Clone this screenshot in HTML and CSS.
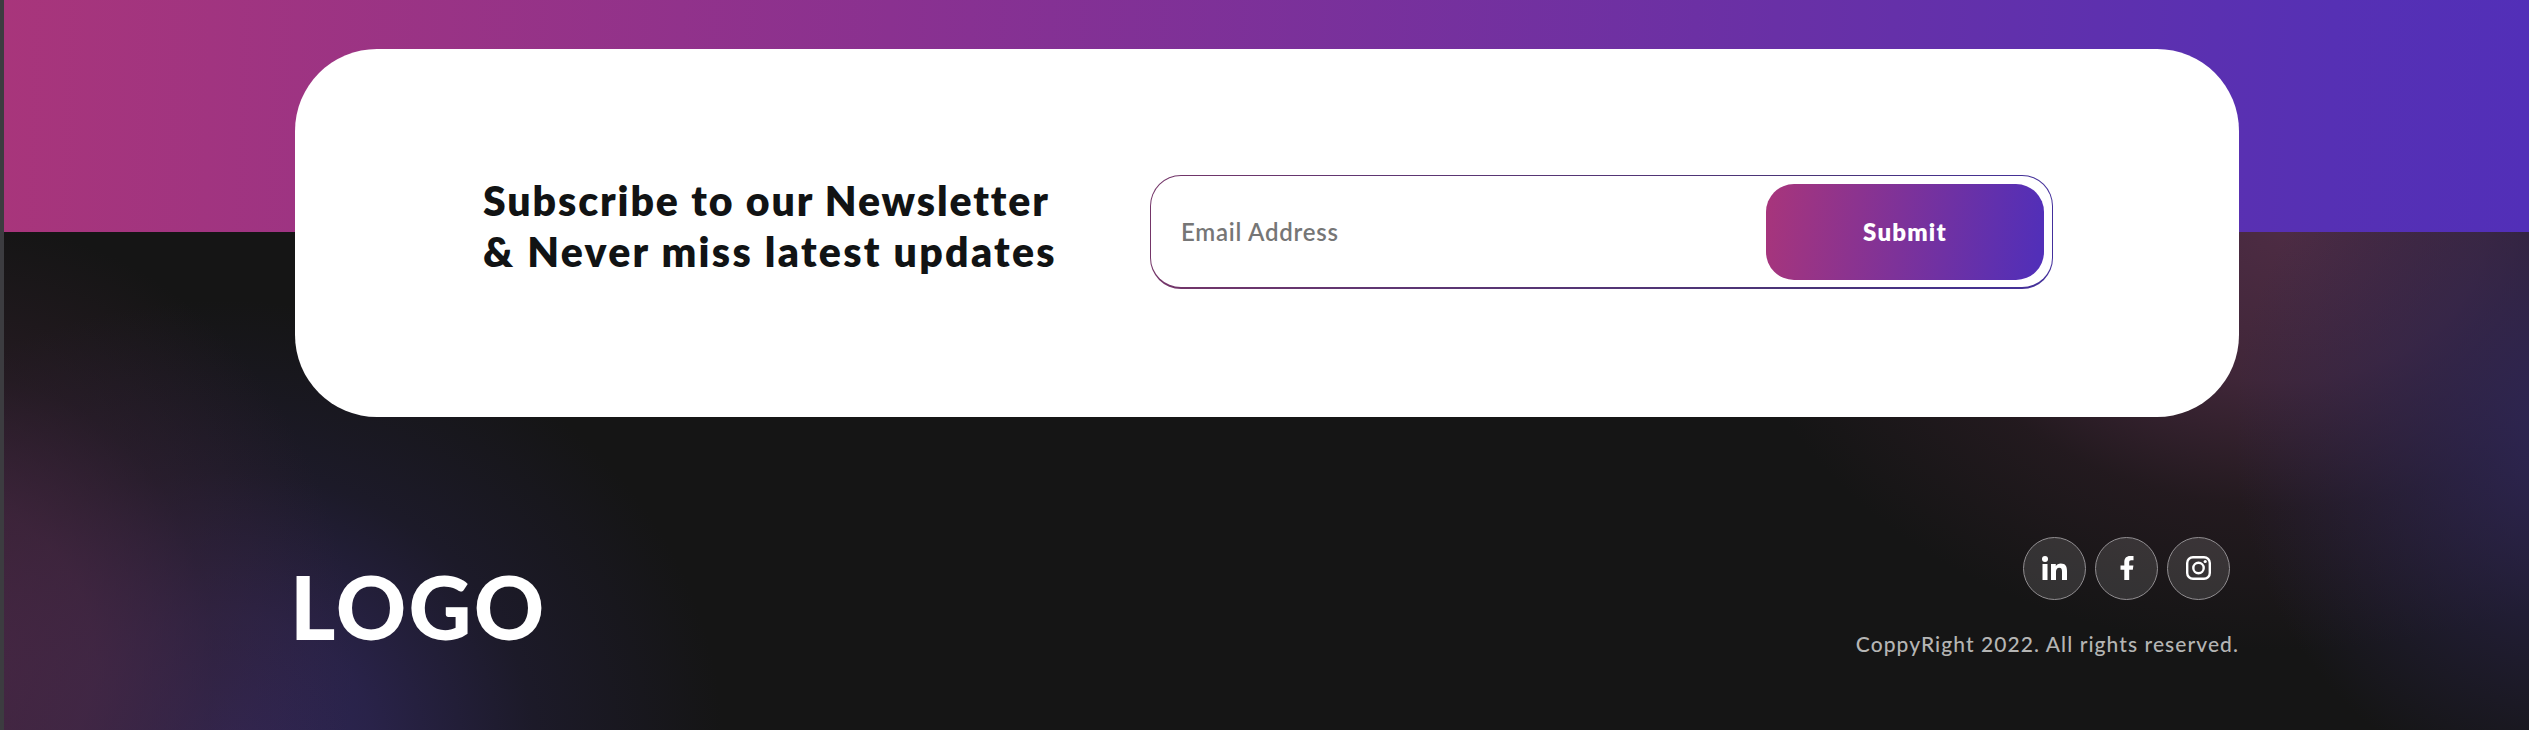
FILE: index.html
```html
<!DOCTYPE html>
<html lang="en">
<head>
<meta charset="utf-8">
<title>Newsletter footer</title>
<link rel="stylesheet" href="styles.css">
</head>
<body>
<div class="page">
  <section class="newsletter">
    <h2 class="newsletter-title"><span class="line-one">Subscribe to our Newsletter</span><br><span class="line-two">&amp; Never miss latest updates</span></h2>
    <form class="signup">
      <input class="signup-input" type="email" placeholder="Email Address" aria-label="Email Address">
      <button class="signup-button" type="button">Submit</button>
    </form>
  </section>
  <footer class="footer">
    <div class="logo">LOGO</div>
    <div class="footer-side">
      <nav class="social">
        <a class="social-link" href="#" aria-label="LinkedIn">
          <svg class="icon" viewBox="0 0 25 24"><circle cx="3" cy="3" r="3"/><path d="M.5 8h5v16h-5zM9 8h4.800v2.200C14.700 8.600 16.500 7.600 18.800 7.600c4.600 0 6.200 2.700 6.200 7.400v9h-5v-8.200c0-2.400-.6-4-2.700-4-2.300 0-3.300 1.700-3.300 4V24H9z"/></svg>
        </a>
        <a class="social-link" href="#" aria-label="Facebook">
          <svg class="icon" viewBox="0 0 25 24"><path d="M10.300 24V13.800H6.500V9.400h3.800V6.200C10.300 2.200 12.500 0 16 0h3.500v4.300h-2.300c-1.500 0-2 .7-2 2v3.100h4.200l-.6 4.400h-3.600V24z"/></svg>
        </a>
        <a class="social-link" href="#" aria-label="Instagram">
          <svg class="icon icon-outline" viewBox="0 0 25 24"><rect x="1.200" y="1.200" width="22.600" height="21.600" rx="5.800"/><circle cx="12.500" cy="12" r="5.200"/><circle class="dot" cx="19.200" cy="5.500" r="1.600"/></svg>
        </a>
      </nav>
      <p class="copyright">CoppyRight 2022. All rights reserved.</p>
    </div>
  </footer>
</div>
</body>
</html>
```
FILE: styles.css
```css
* { box-sizing: border-box; }

body {
  margin: 0;
  font-family: Lato, "Open Sans", sans-serif;
}

.page {
  height: 730px;
  overflow: hidden;
  padding: 49px 290px 0 291px;
  border-left: 4px solid #3c3c40;
  background:
    linear-gradient(92deg, #a8357b 0%, #8a3190 35%, #6930a6 70%, #5630b4 92%, #522fb8 100%) 0 0 / 100% 232px no-repeat,
    radial-gradient(ellipse 400px 440px at -50px 660px, rgba(76, 40, 70, .85) 0%, rgba(74, 40, 66, .7) 35%, rgba(58, 34, 50, .4) 65%, rgba(21, 21, 21, 0) 100%),
    radial-gradient(ellipse 500px 450px at 220px 750px, rgba(49, 40, 95, .95) 0%, rgba(46, 38, 86, .8) 30%, rgba(38, 33, 68, .42) 62%, rgba(21, 21, 21, 0) 100%),
    radial-gradient(ellipse 340px 370px at 2570px 430px, rgba(48, 40, 95, .85) 0%, rgba(46, 38, 86, .6) 40%, rgba(21, 21, 21, 0) 100%),
    radial-gradient(ellipse 560px 420px at 2280px 230px, rgba(80, 45, 70, .95) 0%, rgba(73, 42, 64, .82) 36%, rgba(48, 30, 40, .5) 66%, rgba(21, 21, 21, 0) 100%),
    #151515;
}

.newsletter {
  display: flex;
  align-items: center;
  justify-content: space-between;
  height: 368px;
  padding: 0 186px 2px 188px;
  border-radius: 82px;
  background: #fff;
}

.newsletter-title {
  margin: 0;
  padding-bottom: 12px;
  color: #111314;
  font-size: 41px;
  font-weight: 800;
  line-height: 51px;
  white-space: nowrap;
}

.line-one { letter-spacing: 1.9px; }
.line-two { letter-spacing: 2.3px; }

.signup {
  display: flex;
  width: 903px;
  height: 114px;
  padding: 8px 8px 7px 0;
  border: 1px solid transparent;
  border-bottom-width: 2px;
  border-radius: 31px;
  background:
    linear-gradient(#fff, #fff) padding-box,
    linear-gradient(90deg, #743568, #5f3672 25%, #483478 75%, #44309c) border-box;
}

.signup-input {
  flex: 1;
  min-width: 0;
  padding: 0 0 2px 30px;
  border: 0;
  outline: 0;
  background: transparent;
  font: 600 24px Lato, sans-serif;
  letter-spacing: .75px;
}

.signup-input::placeholder { color: #767676; }

.signup-button {
  width: 278px;
  padding: 0 0 2px;
  border: 0;
  border-radius: 28px;
  background: linear-gradient(97deg, #a8357b, #522fb8 97%);
  color: #fff;
  font: 800 24px Lato, sans-serif;
  letter-spacing: 1.2px;
}

.footer {
  display: flex;
  justify-content: space-between;
  padding-top: 120px;
}

.logo {
  margin-left: -5px;
  padding-top: 18px;
  color: #fff;
  font-size: 87px;
  font-weight: 900;
  line-height: 104px;
  letter-spacing: 2.2px;
}

.footer-side {
  display: flex;
  flex-direction: column;
  align-items: flex-end;
}

.social {
  display: flex;
  gap: 9px;
  padding-right: 9px;
}

.social-link {
  display: grid;
  place-items: center;
  width: 63px;
  height: 63px;
  padding-bottom: 1px;
  border: 1px solid #918e91;
  border-radius: 50%;
  background: rgba(255, 255, 255, .12);
}

.icon {
  width: 25px;
  height: 24px;
  fill: #fff;
}

.icon-outline {
  fill: none;
  stroke: #fff;
  stroke-width: 2.4;
}

.icon-outline .dot {
  fill: #fff;
  stroke: none;
}

.copyright {
  margin: 30px 0 0;
  color: #b5b5b4;
  font-size: 21px;
  font-weight: 500;
  line-height: 28px;
  letter-spacing: 1.07px;
  white-space: nowrap;
}
```
